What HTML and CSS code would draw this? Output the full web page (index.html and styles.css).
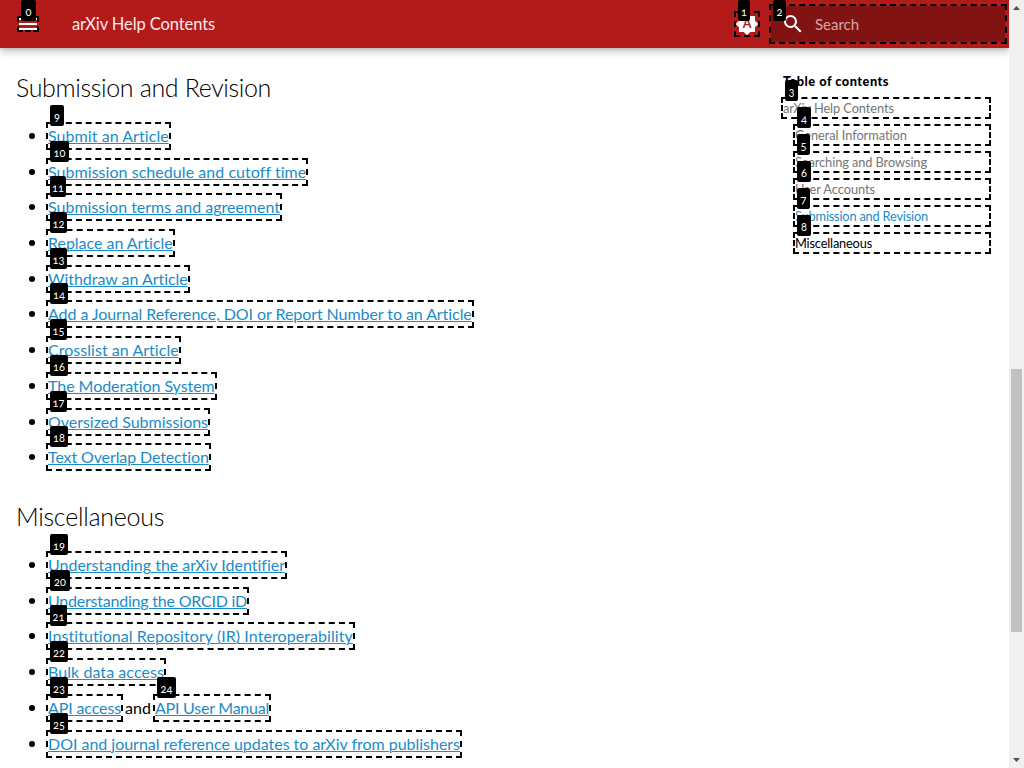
FILE: index.html
```html
<!DOCTYPE html>
<html lang="en">
<head>
<meta charset="utf-8">
<title>arXiv Help Contents</title>
<link rel="stylesheet" href="styles.css">
</head>
<body>
<div class="page">
  <header class="header">
    <div class="menu"><svg class="icon" viewBox="0 0 24 24"><path d="M3 6h18v2H3V6m0 5h18v2H3v-2m0 5h18v2H3v-2z"/></svg><span class="mark menu-box"><b class="tag" style="width:15px">0</b></span></div>
    <div class="title"><span data-w="143">arXiv Help Contents</span></div>
    <div class="palette"><svg class="icon" viewBox="0 0 24 24"><path d="M20 8.69V4h-4.69L12 .69 8.69 4H4v4.69L.69 12 4 15.31V20h4.69L12 23.31 15.31 20H20v-4.69L23.31 12z"/><text x="12" y="16" text-anchor="middle" class="auto">A</text></svg><span class="mark palette-box"><b class="tag" style="width:12px">1</b></span></div>
    <div class="search mark"><b class="tag" style="width:13px">2</b><svg class="icon" viewBox="0 0 24 24"><path d="M9.5 3A6.5 6.5 0 0 1 16 9.5c0 1.61-.59 3.09-1.56 4.23l.27.27h.79l5 5-1.5 1.5-5-5v-.79l-.27-.27A6.516 6.516 0 0 1 9.5 16a6.5 6.5 0 0 1 0-13m0 2C7 5 5 7 5 9.5S7 14 9.5 14 14 12 14 9.5 12 5 9.5 5z"/></svg><span class="placeholder" data-w="44">Search</span></div>
  </header>
  <div class="body">
    <main class="content">
      <h2><span data-w="255">Submission and Revision</span></h2>
      <ul>
        <li><a class="mark"><span data-w="121">Submit an Article</span><b class="tag" style="width:14px">9</b></a></li>
        <li><a class="mark"><span data-w="258">Submission schedule and cutoff time</span><b class="tag" style="width:19px">10</b></a></li>
        <li><a class="mark"><span data-w="232">Submission terms and agreement</span><b class="tag" style="width:16px">11</b></a></li>
        <li><a class="mark"><span data-w="125">Replace an Article</span><b class="tag" style="width:17px">12</b></a></li>
        <li><a class="mark"><span data-w="140">Withdraw an Article</span><b class="tag" style="width:17px">13</b></a></li>
        <li><a class="mark"><span data-w="424">Add a Journal Reference, DOI or Report Number to an Article</span><b class="tag" style="width:18px">14</b></a></li>
        <li><a class="mark"><span data-w="131">Crosslist an Article</span><b class="tag" style="width:17px">15</b></a></li>
        <li><a class="mark"><span data-w="167">The Moderation System</span><b class="tag" style="width:18px">16</b></a></li>
        <li><a class="mark"><span data-w="160">Oversized Submissions</span><b class="tag" style="width:17px">17</b></a></li>
        <li><a class="mark"><span data-w="161">Text Overlap Detection</span><b class="tag" style="width:18px">18</b></a></li>
      </ul>
      <h2><span data-w="148">Miscellaneous</span></h2>
      <ul>
        <li><a class="mark"><span data-w="237">Understanding the arXiv Identifier</span><b class="tag" style="width:18px">19</b></a></li>
        <li><a class="mark"><span data-w="199">Understanding the ORCID iD</span><b class="tag" style="width:20px">20</b></a></li>
        <li><a class="mark"><span data-w="305.4">Institutional Repository (IR) Interoperability</span><b class="tag" style="width:17px">21</b></a></li>
        <li><a class="mark"><span data-w="116">Bulk data access</span><b class="tag" style="width:18px">22</b></a></li>
        <li><a class="mark"><span data-w="73">API access</span><b class="tag" style="width:18px">23</b></a><span class="and" data-w="26">and</span><a class="mark"><span data-w="114">API User Manual</span><b class="tag" style="width:19px">24</b></a></li>
        <li><a class="mark"><span data-w="412">DOI and journal reference updates to arXiv from publishers</span><b class="tag" style="width:18px">25</b></a></li>
      </ul>
    </main>
    <nav class="toc">
      <div class="toc-title"><span data-w="106">Table of contents</span></div>
      <a class="mark"><span data-w="111">arXiv Help Contents</span><b class="tag" style="width:13px">3</b></a>
      <div class="sub">
        <a class="mark"><span data-w="112">General Information</span><b class="tag" style="width:14px">4</b></a>
        <a class="mark"><span data-w="132">Searching and Browsing</span><b class="tag" style="width:13px">5</b></a>
        <a class="mark"><span data-w="80">User Accounts</span><b class="tag" style="width:14px">6</b></a>
        <a class="mark active"><span data-w="133">Submission and Revision</span><b class="tag" style="width:13px">7</b></a>
        <a class="mark next"><span data-w="77">Miscellaneous</span><b class="tag" style="width:14px">8</b></a>
      </div>
    </nav>
  </div>
</div>
<div class="scrollbar">
  <svg class="arrow" viewBox="0 0 15 15"><path d="M4 10h7L7.5 6z"/></svg>
  <div class="thumb"></div>
  <svg class="arrow" viewBox="0 0 15 15"><path d="M4 5h7L7.5 9z"/></svg>
</div>
<script src="fit.js"></script>
</body>
</html>
```
FILE: styles.css
```css
* { box-sizing: border-box; }
body {
  margin: 0;
  height: 768px;
  overflow: hidden;
  display: flex;
  background: #fff;
  color: #000;
  font: 16px/24px Lato, "Open Sans", sans-serif;
}
[data-w] { white-space: nowrap; }
.page { width: 1009px; height: 768px; overflow: hidden; }
.header {
  position: relative;
  z-index: 4;
  height: 48px;
  display: flex;
  align-items: center;
  background: #b31b1b;
  color: #fff;
  box-shadow: 0 0 3px rgba(0,0,0,.14), 0 3px 8px rgba(0,0,0,.28);
}
.icon { display: block; width: 24px; height: 24px; fill: #fff; flex: none; }
.auto { font: bold 12.5px Lato, sans-serif; fill: #b31b1b; }
.menu { position: relative; margin-left: 16px; }
.title { margin-left: 32px; width: 663px; font-size: 16.5px; color: #fbe9e9; padding-bottom: 1px; }
.palette { position: relative; }
.mark { position: relative; outline: 2px dashed #000; }
.menu-box, .palette-box { position: absolute; }
.menu-box { left: 3px; top: 6px; width: 18px; height: 12px; }
.palette-box { left: 1px; top: 1px; width: 22px; height: 22px; }
.search {
  margin-left: 12px;
  width: 234px;
  height: 36px;
  padding-left: 10px;
  display: flex;
  align-items: center;
  background: #821313;
}
.placeholder { margin-left: 10px; font-size: 15px; color: #d6a5a5; }
.tag {
  position: absolute;
  z-index: 3;
  left: 2px;
  top: -19px;
  height: 21px;
  border-radius: 2px;
  background: #000;
  color: #fff;
  font: 11px/23px Lato, sans-serif;
  font-variant-numeric: oldstyle-nums;
  text-align: center;
}
.header .tag { top: -18px; }
.palette .tag { top: -13px; }
.search .tag { top: -6px; }
.body { display: flex; justify-content: space-between; padding: 0 20px 0 16px; }
h2 { margin: 0; font-size: 25px; line-height: 32px; font-weight: 300; }
h2:first-child { padding-top: 23px; }
ul { list-style: none; margin: 21px 0 19.2px; padding: 0 0 0 13px; }
li { height: 35.7px; display: flex; align-items: flex-start; }
li::before { content: ""; width: 6px; height: 6px; border-radius: 50%; background: #000; margin: 9px 13px 0 0; }
li a { height: 24px; color: #1b8cc8; text-decoration: underline; text-underline-offset: 1px; text-decoration-thickness: 1px; text-decoration-skip-ink: auto; }
.and { margin: 0 4px; }
.toc { width: 206px; padding-top: 21px; font-size: 12.8px; line-height: 18px; }
.toc-title { font-weight: 900; height: 30px; line-height: 24px; }
.toc a { display: block; height: 18px; margin-bottom: 9px; color: #757575; }
.toc .sub { padding-left: 12px; }
.toc .active { color: #1b8cc8; }
.toc .next { color: #000; }
.scrollbar { width: 15px; height: 768px; background: #f0f0f0; display: flex; flex-direction: column; justify-content: space-between; }
.arrow { width: 15px; height: 15px; fill: #505050; display: block; }
.thumb { width: 11px; height: 263px; margin: 354px 0 121px 2px; background: #c1c1c1; }
```
FILE: fit.js
```js
// Tracks each label to its designed width.
document.querySelectorAll('[data-w]').forEach(function (el) {
  var range = document.createRange();
  range.selectNodeContents(el);
  var natural = range.getBoundingClientRect().width;
  var target = Number(el.dataset.w);
  el.style.letterSpacing = (target - natural) / el.textContent.length + 'px';
});
```
